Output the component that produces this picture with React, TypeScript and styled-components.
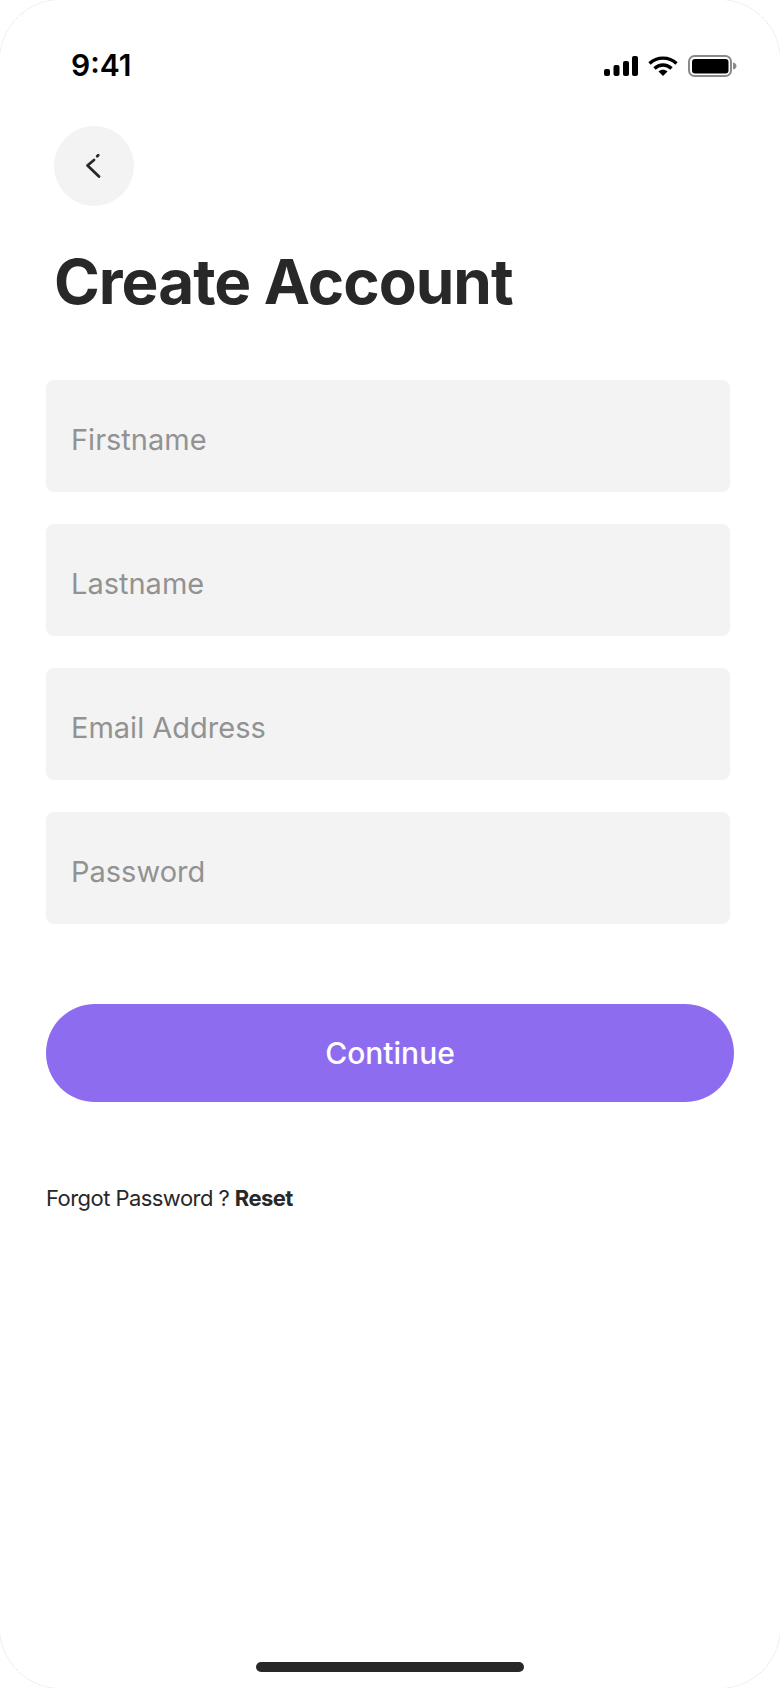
import React from 'react';
import styled, { createGlobalStyle } from 'styled-components';

const GlobalStyle = createGlobalStyle`
	html, body {
		margin: 0;
		padding: 0;
		width: 780px;
		height: 1688px;
		overflow: hidden;
		background: #fff;
	}
	* {
		box-sizing: border-box;
	}
`;

/* the 1px frame sits just outside the window, so only its corner arcs show */
const Screen = styled.div`
	width: 782px;
	height: 1690px;
	margin: -1px;
	display: flex;
	flex-direction: column;
	background: #fff;
	border: 1px dotted #dedede;
	border-radius: 62px;
	font-family: Inter, "Liberation Sans", sans-serif;
	overflow: hidden;
`;

const StatusBar = styled.div`
	height: 126px;
	flex-shrink: 0;
	display: flex;
	align-items: flex-start;
	justify-content: space-between;
	padding: 47px 43px 0 71px;
`;

const Time = styled.span`
	font-size: 30px;
	line-height: 36px;
	font-weight: 600;
	color: #000;
`;

const StatusIcons = styled.div`
	display: flex;
	align-items: center;
	gap: 10px;
	padding-top: 8px;
`;

const BackButton = styled.button`
	width: 80px;
	height: 80px;
	margin-left: 54px;
	padding: 0;
	border: 0;
	border-radius: 50%;
	background: #f3f3f3;
	display: flex;
	align-items: center;
	justify-content: center;
	flex-shrink: 0;
`;

const Title = styled.h1`
	margin: 36px 0 0 54px;
	height: 80px;
	font-size: 62px;
	line-height: 80px;
	font-weight: 700;
	letter-spacing: -1px;
	color: #282828;
`;

const Form = styled.form`
	display: flex;
	flex-direction: column;
	margin: 58px 0 0 46px;
`;

const Fields = styled.div`
	display: flex;
	flex-direction: column;
	gap: 32px;
`;

const Field = styled.input`
	width: 684px;
	height: 112px;
	padding: 6px 25px 0;
	border: 0;
	border-radius: 8px;
	background: #f3f3f3;
	font-family: inherit;
	font-size: 29px;
	color: #282828;

	&::placeholder {
		color: #929292;
		opacity: 1;
	}
`;

const Continue = styled.button`
	width: 688px;
	height: 98px;
	margin-top: 80px;
	border: 0;
	border-radius: 49px;
	background: #8e6cf0;
	color: #fff;
	font-family: inherit;
	font-size: 30px;
	font-weight: 500;
`;

const Forgot = styled.p`
	margin: 81px 0 0 46px;
	font-size: 22px;
	line-height: 30px;
	letter-spacing: -0.55px;
	color: #282828;

	b {
		font-weight: 700;
	}
`;

const HomeBar = styled.div`
	width: 268px;
	height: 10px;
	margin: auto auto 16px;
	border-radius: 5px;
	background: #282828;
`;

function App() {
	return (
		<>
			<GlobalStyle />
			<Screen>
				<StatusBar>
					<Time>9:41</Time>
					<StatusIcons>
						<svg width="34" height="20" viewBox="0 0 34 20">
							<rect x="0" y="13" width="6" height="7" rx="2" fill="#000" />
							<rect x="9.5" y="9" width="6" height="11" rx="2" fill="#000" />
							<rect x="19" y="5" width="6" height="15" rx="2" fill="#000" />
							<rect x="28" y="0" width="6" height="20" rx="2" fill="#000" />
						</svg>
						<svg width="30" height="20" viewBox="0 0 30 20" fill="none" stroke="#000" strokeWidth="3.4">
							<path d="M1.5 7.4C9 0.4 21 0.4 28.5 7.4" />
							<path d="M6.5 12.4C11.5 7.8 18.5 7.8 23.5 12.4" />
							<path d="M10.5 15.6L15 20L19.5 15.6C17 13.2 13 13.2 10.5 15.6Z" fill="#000" stroke="none" />
						</svg>
						<svg width="49" height="22" viewBox="0 0 49 22">
							<rect x="1" y="1" width="42" height="20" rx="5.5" fill="none" stroke="#8a8a8a" strokeWidth="2" />
							<rect x="4" y="4" width="36.5" height="14.5" rx="3" fill="#000" />
							<path d="M45 7.5C47.5 8 48.5 9.5 48.5 11C48.5 12.5 47.5 14 45 14.5Z" fill="#8a8a8a" />
						</svg>
					</StatusIcons>
				</StatusBar>
				<BackButton type="button" aria-label="Back">
					<svg width="24" height="28" viewBox="0 0 24 28" fill="none" stroke="#282828" strokeWidth="2.8" strokeLinecap="round" strokeLinejoin="round">
						<path d="M17 24.5L5.5 13.5L12 8" />
						<path d="M15.2 4.2L16.2 3.2" />
					</svg>
				</BackButton>
				<Title>Create Account</Title>
				<Form onSubmit={(e) => { e.preventDefault(); }}>
					<Fields>
						<Field placeholder="Firstname" />
						<Field placeholder="Lastname" />
						<Field placeholder="Email Address" />
						<Field placeholder="Password" type="password" />
					</Fields>
					<Continue type="submit">Continue</Continue>
				</Form>
				<Forgot>Forgot Password ? <b>Reset</b></Forgot>
				<HomeBar />
			</Screen>
		</>
	);
}

export default App;
